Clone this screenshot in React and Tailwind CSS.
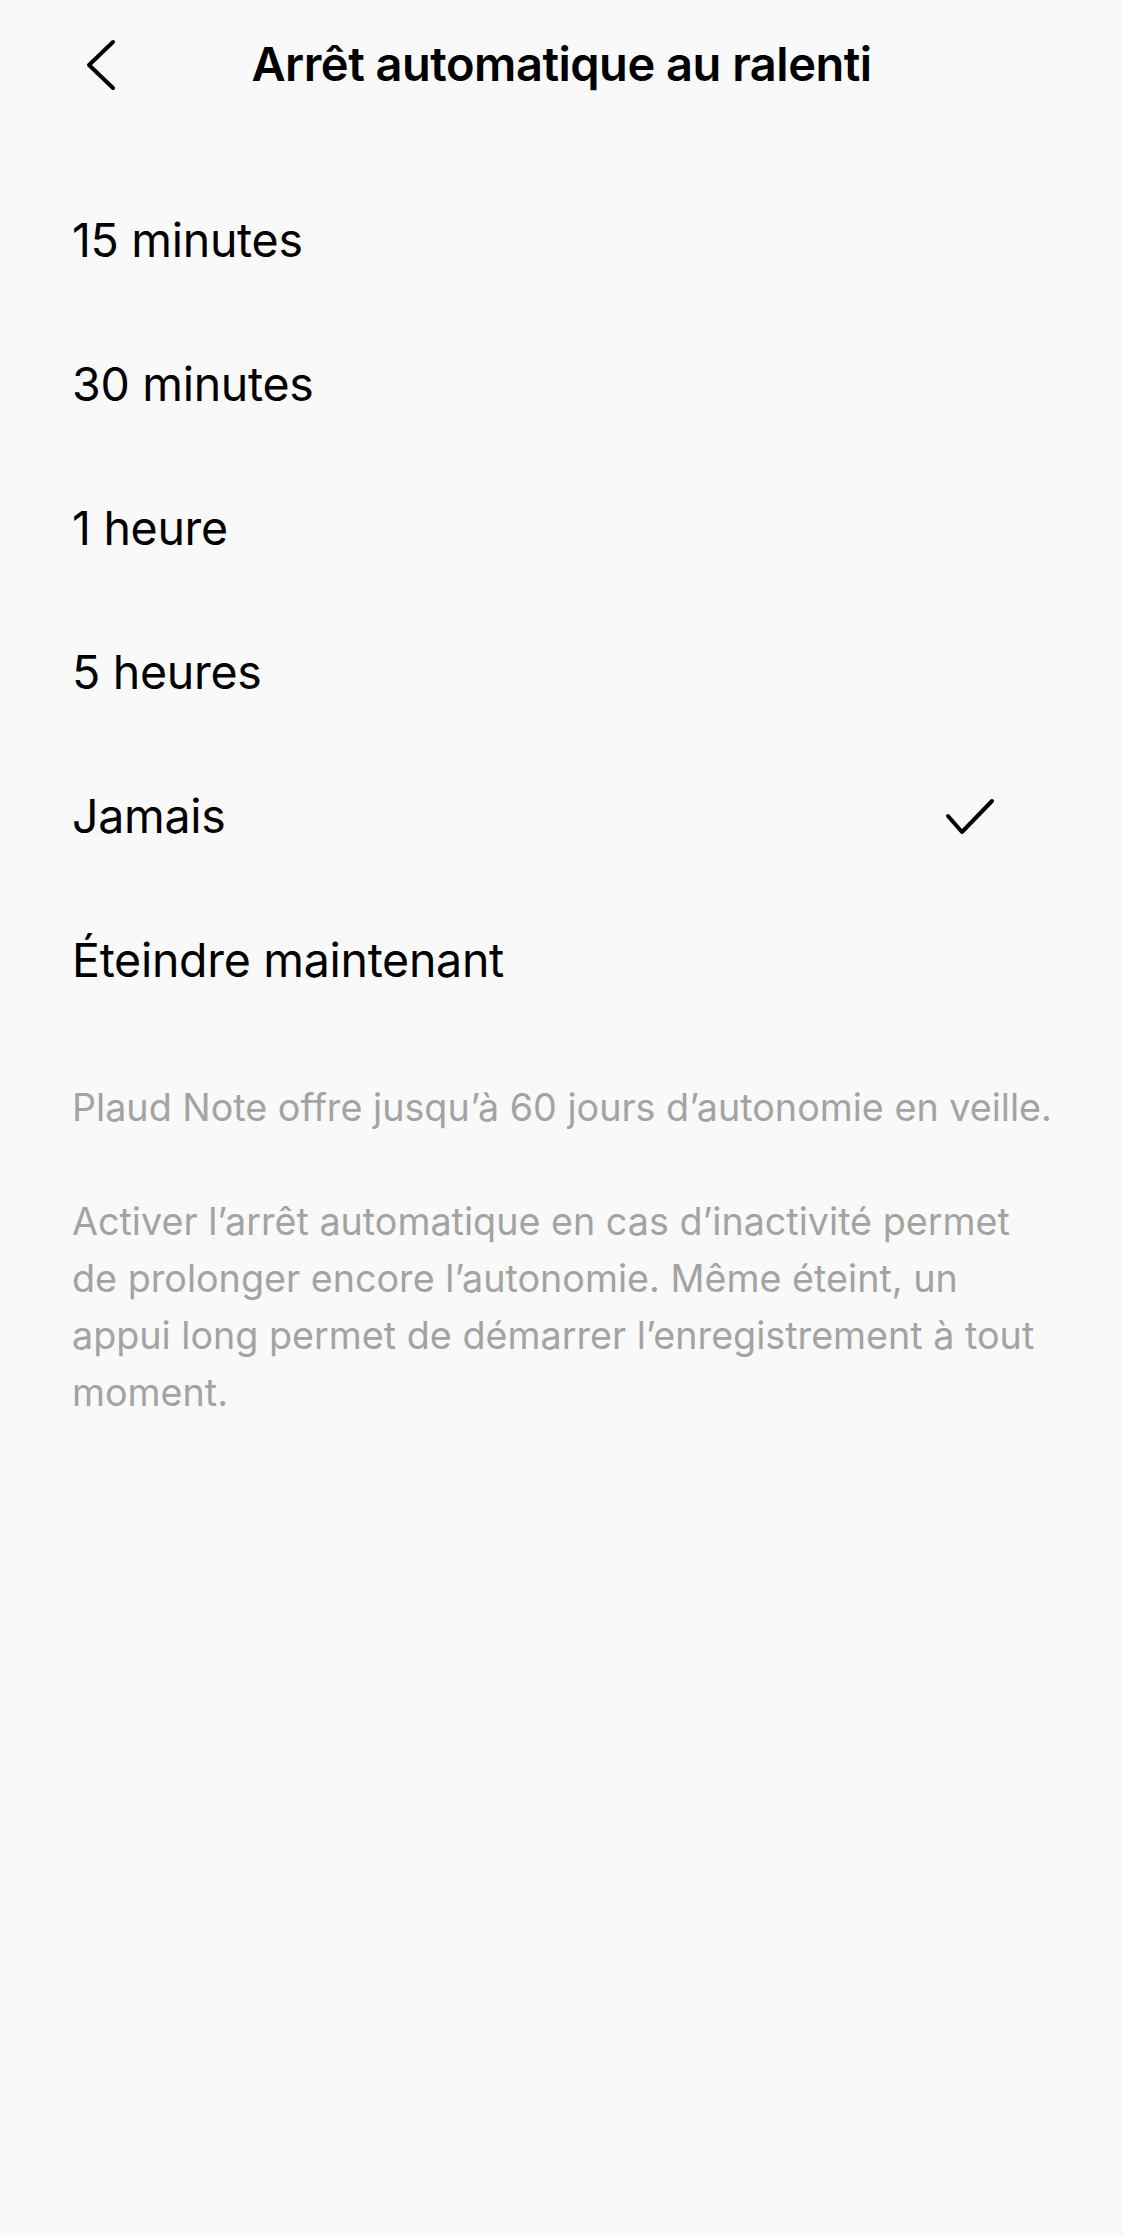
export default function App() {
  const options = [
    "15 minutes",
    "30 minutes",
    "1 heure",
    "5 heures",
    "Jamais",
    "Éteindre maintenant",
  ];
  const selected = "Jamais";

  return (
    <div
      className="min-h-[2236px] w-full bg-[#f9f9f9] text-black"
      style={{ fontFamily: "Inter, 'Noto Sans', sans-serif" }}
    >
      {/* Header */}
      <header className="relative flex h-[128px] items-center justify-center">
        <button className="absolute left-[74px] top-[30px] flex h-[70px] w-[56px] items-center justify-center">
          <svg width="34" height="52" viewBox="0 0 34 52" fill="none">
            <polyline
              points="28,3 4,26 28,49"
              stroke="#000"
              strokeWidth="4"
              strokeLinecap="round"
              strokeLinejoin="round"
            />
          </svg>
        </button>
        <h1 className="text-[47px] font-semibold tracking-[-0.5px]">
          Arrêt automatique au ralenti
        </h1>
      </header>

      {/* Options */}
      <ul className="mt-[41px]">
        {options.map((opt) => (
          <li
            key={opt}
            className="flex h-[144px] items-center justify-between pl-[72px] pr-[128px]"
          >
            <span className="text-[46.5px] tracking-[-0.3px]">{opt}</span>
            {opt === selected && (
              <svg width="50" height="38" viewBox="0 0 50 38" fill="none">
                <polyline
                  points="3,18 17,34 47,3"
                  stroke="#000"
                  strokeWidth="4"
                  strokeLinecap="round"
                  strokeLinejoin="round"
                />
              </svg>
            )}
          </li>
        ))}
      </ul>

      {/* Info */}
      <div className="mt-[46px] px-[72px] text-[37.7px] leading-[57px] text-[#a3a3a3]">
        <p className="whitespace-nowrap">
          Plaud Note offre jusqu’à 60 jours d’autonomie en veille.
        </p>
        <p className="mt-[57px]">
          Activer l’arrêt automatique en cas d’inactivité permet
          <br />
          de prolonger encore l’autonomie. Même éteint, un
          <br />
          appui long permet de démarrer l’enregistrement à tout
          <br />
          moment.
        </p>
      </div>
    </div>
  );
}
